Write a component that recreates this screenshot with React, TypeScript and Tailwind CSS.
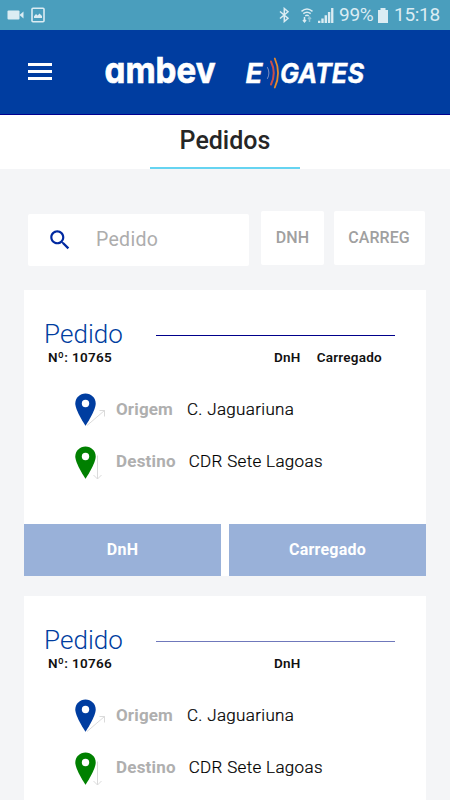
const orders = [
  {
    number: '10765',
    tags: ['DnH', 'Carregado'],
    origin: 'C. Jaguariuna',
    destination: 'CDR Sete Lagoas',
    actions: ['DnH', 'Carregado'],
    line: 'bg-[#00008b]',
  },
  {
    number: '10766',
    tags: ['DnH'],
    origin: 'C. Jaguariuna',
    destination: 'CDR Sete Lagoas',
    actions: [],
    line: 'bg-[#6f78bb]',
  },
];

function StatusBar() {
  return (
    <div className="h-[30px] shrink-0 bg-[#4a9ebd] flex items-center text-[#dbecf3]">
      <svg className="ml-[7px] w-[17px] h-[10px]" viewBox="0 0 17 10" fill="currentColor">
        <rect x="0.5" y="0.5" width="12" height="9" rx="1" />
        <path d="M12.5 5 16.5 1.5v7z" />
      </svg>
      <svg className="ml-[7px] w-[14px] h-[16px]" viewBox="0 0 14 16">
        <rect x="1" y="1.3" width="12" height="13.4" rx="1" fill="none" stroke="currentColor" strokeWidth="1.6" />
        <path d="M3 11V9.2L5 7l1.6 1.4L8.5 6.5 11 9v2z" fill="currentColor" />
      </svg>
      <svg className="ml-[234px] w-[11px] h-[16px]" viewBox="0 0 11 16" fill="none" stroke="currentColor" strokeWidth="1.5">
        <path d="M1 4.5 9 11.3 5.3 14.5V1.5L9 4.7 1 11.5" />
      </svg>
      <svg className="ml-[10px] w-[14px] h-[16px]" viewBox="0 0 14 16" fill="none" stroke="currentColor" strokeWidth="1.5">
        <path d="M1.5 4.3q5.5-4.6 11 0M3.3 6.7q3.7-3 7.4 0M5.2 9q1.8-1.4 3.6 0" />
        <path d="M4.5 10v5M3 13l1.5 1.8L6 13" />
        <path d="M9.5 15v-5M8 12l1.5-1.8L11 12" opacity="0.5" />
      </svg>
      <svg className="ml-[4px] w-[16px] h-[15px]" viewBox="0 0 16 15" fill="currentColor">
        <path d="M0 15v-2.2h2.4V15zM3.3 15v-4.6h2.4V15zM6.6 15V7.3H9V15zM9.9 15V4h2.4v11zM13.1 15V0h2.3v15z" />
      </svg>
      <span className="ml-[5px] w-[35px] whitespace-nowrap text-[19px] leading-[30px] tracking-[-0.3px]">99%</span>
      <svg className="ml-[4px] w-[10px] h-[15px]" viewBox="0 0 10 15" fill="currentColor">
        <path d="M0 2h2.5V0h5v2H10v13H0z" />
      </svg>
      <span className="ml-[6px] text-[19px] leading-[30px] tracking-[-0.3px] whitespace-nowrap">15:18</span>
    </div>
  );
}

function Header() {
  return (
    <header className="h-[85px] shrink-0 bg-[#003da0] border-b border-[#00008f] flex items-center">
      <div className="ml-[28px] mb-[2px] w-6 flex flex-col gap-1">
        <span className="h-[3px] bg-white" />
        <span className="h-[3px] bg-white" />
        <span className="h-[3px] bg-white" />
      </div>
      <svg className="ml-[52px] w-[114px] h-[60px] overflow-visible" viewBox="0 0 114 60">
        <text
          x="0.5"
          y="41"
          textLength="111"
          lengthAdjust="spacingAndGlyphs"
          fill="#fff"
          stroke="#fff"
          strokeWidth="0.7"
          className="font-['Inter',sans-serif] font-bold text-[36px] [font-feature-settings:'cv11']"
        >
          ambev
        </text>
      </svg>
      <svg className="ml-[26px] w-[124px] h-[40px]" viewBox="0 0 124 40" fontFamily="Inter, sans-serif" fontWeight="700" fontStyle="italic" fontSize="27">
        <text x="1.5" y="31" textLength="17" lengthAdjust="spacingAndGlyphs" fill="#fff" stroke="#fff" strokeWidth="0.4">E</text>
        <g fill="none" strokeLinecap="round">
          <path d="M23.5 15.5q3 5.5 0 11" stroke="#7f8fc0" strokeWidth="1" />
          <path d="M27 9.5q5.500 11.500 0 23" stroke="#c9504a" strokeWidth="2" />
          <path d="M30.8 6.5q6.500 14.500 0 29" stroke="#e58a2c" strokeWidth="1.8" />
        </g>
        <text x="36" y="31" textLength="84" lengthAdjust="spacingAndGlyphs" fill="#fff" stroke="#fff" strokeWidth="0.4">GATES</text>
      </svg>
    </header>
  );
}

function Pin({ color, arrow }: { color: string; arrow: string }) {
  return (
    <svg className="w-[32px] h-[33px] shrink-0" viewBox="0 0 32 33" fill="none">
      <path d="M11.5 0.5C5.8 0.5 1.3 4.9 1.3 10.5c0 7.2 10.2 22.3 10.2 22.3S21.7 17.7 21.7 10.5C21.7 4.9 17.2 0.5 11.5 0.5z" fill={color} />
      <circle cx="11.5" cy="10.5" r="3.7" fill="#fff" />
      <path d={arrow} stroke="#d6d6d6" strokeWidth="0.9" />
    </svg>
  );
}

function OrderCard({ order }: { order: (typeof orders)[number] }) {
  return (
    <div className="h-[286px] shrink-0 bg-white pt-[29px] flex flex-col">
      <div className="pl-5 pr-[31px] flex items-center h-[30px]">
        <h2 className="w-[112px] text-[26px] leading-[30px] font-light tracking-[0.05px] text-[#003da0]">Pedido</h2>
        <div className={`h-px flex-1 mt-[3px] ${order.line}`} />
      </div>
      <div className="pl-[24px] flex text-[13.5px] leading-4 font-semibold text-[#111]">
        <span className="w-[226px] tracking-[0.3px]">Nº: {order.number}</span>
        {order.tags.map((tag) => (
          <span key={tag} className="mr-4 tracking-[0.25px]">{tag}</span>
        ))}
      </div>

      {/* Route */}
      <div className="pl-[50px] mt-[28px] flex flex-col gap-[19.5px] text-[17px] leading-5 text-[#000]">
        <div className="flex items-center h-[33px]">
          <Pin color="#003da0" arrow="M13 32.5 30.5 17.5M25.5 17.5h5v6" />
          <span className="ml-[10px] mb-[2px] font-bold tracking-[0.15px] text-[#afafaf]">Origem</span>
          <span className="ml-[14px] mb-[2px] font-light tracking-[0.33px] [-webkit-text-stroke:0.2px]">{order.origin}</span>
        </div>
        <div className="flex items-center h-[33px]">
          <Pin color="#008000" arrow="M23.5 9.5v23.3M19.5 29l4 4 4-4" />
          <span className="ml-[10px] mb-[2px] font-bold tracking-[0.2px] text-[#afafaf]">Destino</span>
          <span className="ml-[13px] mb-[2px] font-light tracking-[0.33px] [-webkit-text-stroke:0.2px]">{order.destination}</span>
        </div>
      </div>

      {order.actions.length > 0 && (
        <div className="mt-auto flex gap-2 text-white text-base font-bold tracking-[0.2px]">
          {order.actions.map((action) => (
            <button key={action} className="h-[52px] flex-1 bg-[#99b1d9]">{action}</button>
          ))}
        </div>
      )}
    </div>
  );
}

export default function App() {
  return (
    <div className="w-[450px] h-[800px] overflow-hidden flex flex-col bg-[#f4f5f7] font-['Roboto',sans-serif]">
      <StatusBar />
      <Header />

      <div className="h-[54px] shrink-0 bg-white flex justify-center">
        <h1 className="w-[150px] pt-[11px] border-b-2 border-[#66d4f1] text-center text-[25px] leading-[30px] font-medium text-[#262626]">Pedidos</h1>
      </div>

      {/* Search and filters */}
      <div className="mt-[42px] h-[55px] shrink-0 pl-[28px] pr-[25px] flex items-start">
        <div className="mt-[3px] w-[221px] h-[52px] rounded-[2px] bg-white flex items-center">
          <svg className="ml-[19px] w-[26px] h-[26px]" viewBox="0 0 24 24" fill="#0029a0">
            <path d="M15.5 14h-.79l-.28-.27C15.41 12.59 16 11.11 16 9.5 16 5.91 13.09 3 9.5 3S3 5.91 3 9.5 5.91 16 9.5 16c1.61 0 3.09-.59 4.23-1.57l.27.28v.79l5 4.99L20.49 19l-4.99-5zm-6 0C7.01 14 5 11.99 5 9.5S7.01 5 9.5 5 14 7.01 14 9.5 11.99 14 9.5 14z" />
          </svg>
          <span className="ml-[23px] text-[19.5px] tracking-[0.3px] text-[#adadad]">Pedido</span>
        </div>
        <button className="ml-3 w-[63px] h-[54px] rounded-[2px] bg-white pb-px text-base font-medium tracking-[0.1px] text-[#a0a0a0]">DNH</button>
        <button className="ml-[10px] w-[91px] h-[54px] rounded-[2px] bg-white pb-px pr-[1px] text-base font-medium tracking-[0.1px] text-[#a0a0a0]">CARREG</button>
      </div>

      <main className="mt-6 px-6 flex flex-col gap-5">
        {orders.map((order) => (
          <OrderCard key={order.number} order={order} />
        ))}
      </main>
    </div>
  );
}
